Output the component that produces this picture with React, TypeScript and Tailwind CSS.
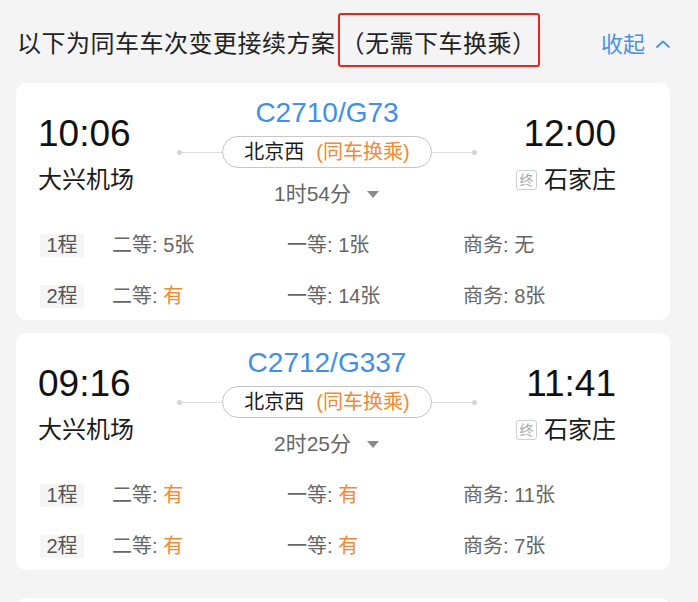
import React from "react";

type Seat = { label: string; value: string; hot?: boolean };
type Leg = { tag: string; seats: Seat[] };
type Plan = {
  code: string;
  depart: string;
  from: string;
  arrive: string;
  to: string;
  via: string;
  duration: string;
  legs: Leg[];
};

const plans: Plan[] = [
  {
    code: "C2710/G73",
    depart: "10:06",
    from: "大兴机场",
    arrive: "12:00",
    to: "石家庄",
    via: "北京西",
    duration: "1时54分",
    legs: [
      {
        tag: "1程",
        seats: [
          { label: "二等", value: "5张" },
          { label: "一等", value: "1张" },
          { label: "商务", value: "无" },
        ],
      },
      {
        tag: "2程",
        seats: [
          { label: "二等", value: "有", hot: true },
          { label: "一等", value: "14张" },
          { label: "商务", value: "8张" },
        ],
      },
    ],
  },
  {
    code: "C2712/G337",
    depart: "09:16",
    from: "大兴机场",
    arrive: "11:41",
    to: "石家庄",
    via: "北京西",
    duration: "2时25分",
    legs: [
      {
        tag: "1程",
        seats: [
          { label: "二等", value: "有", hot: true },
          { label: "一等", value: "有", hot: true },
          { label: "商务", value: "11张" },
        ],
      },
      {
        tag: "2程",
        seats: [
          { label: "二等", value: "有", hot: true },
          { label: "一等", value: "有", hot: true },
          { label: "商务", value: "7张" },
        ],
      },
    ],
  },
];

function ChevronUp() {
  return (
    <svg width="16" height="10" viewBox="0 0 16 10" fill="none">
      <path d="M2 8 L8 2.5 L14 8" stroke="#4a92e4" strokeWidth="1.8" strokeLinecap="round" strokeLinejoin="round" />
    </svg>
  );
}

function Caret() {
  return (
    <svg width="14" height="9" viewBox="0 0 14 9">
      <path d="M1 1 H13 L7 8 Z" fill="#8a8a8a" />
    </svg>
  );
}

function PlanCard({ plan }: { plan: Plan }) {
  return (
    <div className="rounded-[10px] bg-white pl-[22px] pr-[54px] pt-[14px] pb-[9px]">
      <div className="flex items-start">
        {/* departure */}
        <div className="w-[139px] pt-[17px]">
          <div className="h-[40px] text-[37px] leading-[40px] text-[#111]">{plan.depart}</div>
          <div className="mt-[10px] h-[32px] text-[24px] leading-[32px] text-[#1a1a1a]">{plan.from}</div>
        </div>

        {/* train route */}
        <div className="flex w-[300px] flex-col items-center">
          <div className="h-[32px] text-[28px] leading-[32px] text-[#4090e8]">{plan.code}</div>
          <div className="mt-[7px] flex w-full items-center">
            <span className="h-[5px] w-[5px] rounded-full bg-[#d4d4d4]" />
            <span className="h-px flex-1 bg-[#dedede]" />
            <div className="flex h-[32px] w-[210px] items-center justify-center rounded-full border border-[#c6c6c6] text-[20px] leading-[30px]">
              <span className="text-[#1c1c1c]">{plan.via}</span>
              <span className="ml-[12px] text-[#f08a33]">(同车换乘)</span>
            </div>
            <span className="h-px flex-1 bg-[#dedede]" />
            <span className="h-[5px] w-[5px] rounded-full bg-[#d4d4d4]" />
          </div>
          <div className="mt-[12px] flex h-[28px] items-center text-[21px] leading-[28px] text-[#666]">
            <span>{plan.duration}</span>
            <span className="ml-[15px] flex items-center">
              <Caret />
            </span>
          </div>
        </div>

        {/* arrival */}
        <div className="flex w-[139px] flex-col items-end pt-[17px]">
          <div className="h-[40px] text-[37px] leading-[40px] text-[#111]">{plan.arrive}</div>
          <div className="mt-[10px] flex h-[32px] items-center">
            <span className="flex h-[20px] w-[21px] items-center justify-center rounded-[3px] border border-[#cfcfcf] text-[14px] leading-none text-[#a8a8a8]">
              终
            </span>
            <span className="ml-[7px] text-[24px] leading-[32px] text-[#1a1a1a]">{plan.to}</span>
          </div>
        </div>
      </div>

      {/* seats per leg */}
      <div className="mt-[22px] flex flex-col gap-[21px] pl-[2px]">
        {plan.legs.map((leg) => (
          <div key={leg.tag} className="flex h-[30px] items-center text-[20px] text-[#666]">
            <span className="flex h-[23px] w-[44px] items-center justify-center bg-[#f5f5f5] text-[#555]">
              {leg.tag}
            </span>
            <div className="ml-[28px] grid flex-1 grid-cols-[175px_176px_1fr]">
              {leg.seats.map((s) => (
                <span key={s.label} className="whitespace-nowrap">
                  {s.label}: <span className={s.hot ? "text-[#f08a33]" : ""}>{s.value}</span>
                </span>
              ))}
            </div>
          </div>
        ))}
      </div>
    </div>
  );
}

export default function App() {
  return (
    <div
      className="h-[602px] w-[698px] overflow-hidden bg-[#f4f4f4]"
      style={{ fontFamily: '"Liberation Sans", "Noto Sans CJK SC", sans-serif' }}
    >
      <div className="flex h-[80px] items-center justify-between pl-[17px] pr-[27px]">
        <div className="flex items-center text-[24px] tracking-[0.5px] text-[#222]">
          <span className="pt-[8px]">以下为同车车次变更接续方案</span>
          <span className="ml-[2px] flex h-[54px] items-center rounded-[3px] border-2 border-[#e8281f] px-[1px] pt-[8px]">
            （无需下车换乘）
          </span>
        </div>
        <div className="flex items-center pt-[8px] text-[22px] text-[#4a92e4]">
          <span>收起</span>
          <span className="ml-[10px] flex items-center">
            <ChevronUp />
          </span>
        </div>
      </div>

      <div className="mt-[3px] flex flex-col gap-[13px] pl-[16px] pr-[28px]">
        {plans.map((p) => (
          <PlanCard key={p.code} plan={p} />
        ))}
        <div className="mt-[15px] h-[60px] rounded-[10px] bg-white" />
      </div>
    </div>
  );
}
